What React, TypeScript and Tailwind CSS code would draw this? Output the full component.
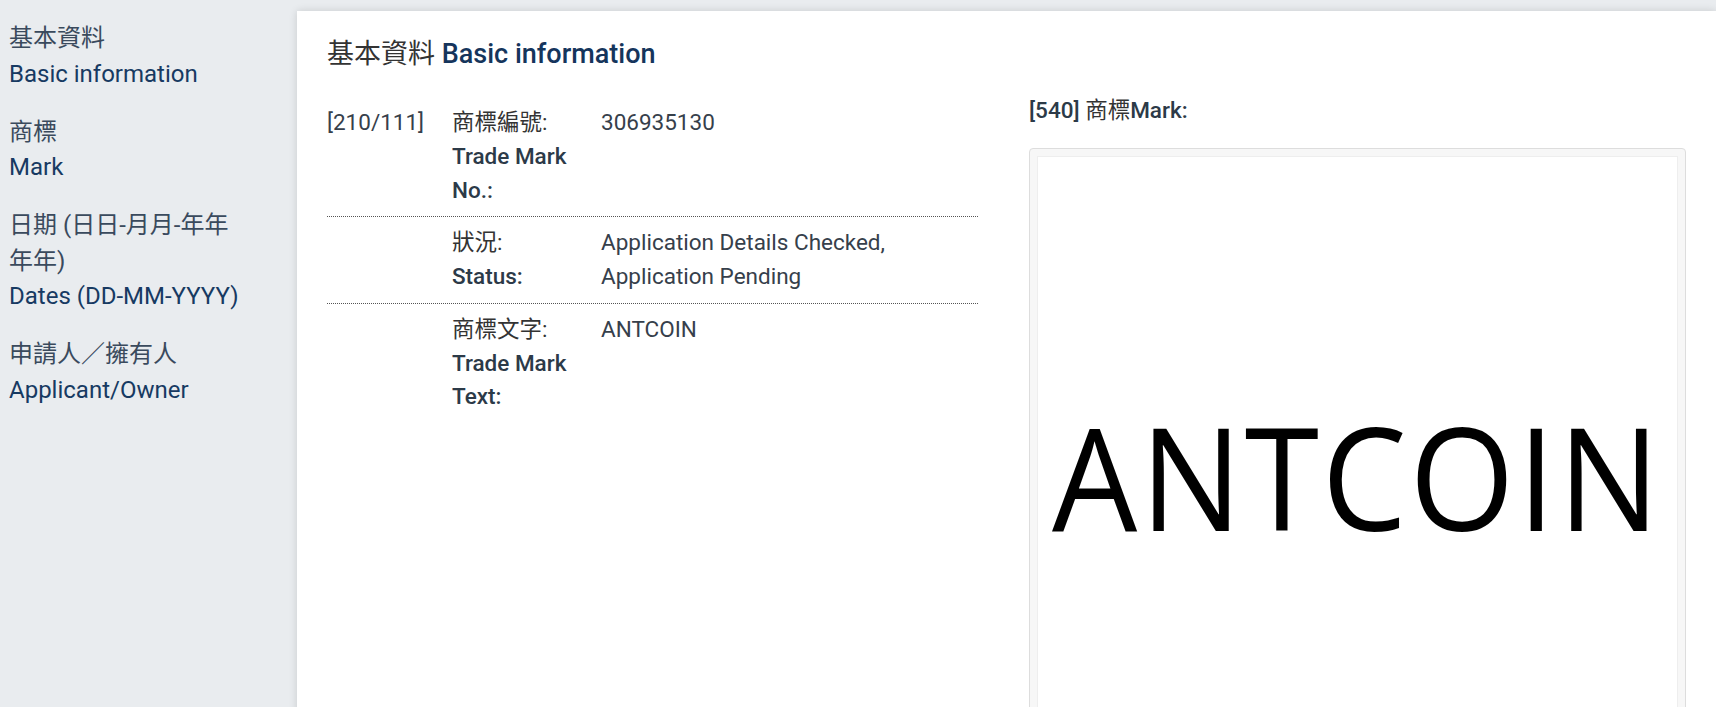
import React from 'react';

type Row = {
  code?: string;
  zh: string;
  en: string;
  value: string;
};

const rows: Row[] = [
  { code: '[210/111]', zh: '商標編號:', en: 'Trade Mark No.:', value: '306935130' },
  { zh: '狀況:', en: 'Status:', value: 'Application Details Checked, Application Pending' },
  { zh: '商標文字:', en: 'Trade Mark Text:', value: 'ANTCOIN' },
];

const nav = [
  { zh: '基本資料', en: 'Basic information' },
  { zh: '商標', en: 'Mark' },
  { zh: '日期 (日日-月月-年年年年)', en: 'Dates (DD-MM-YYYY)' },
  { zh: '申請人／擁有人', en: 'Applicant/Owner' },
];

const App = () => {
  return (
    <div className="min-h-screen bg-[#e9ecef] flex font-['Roboto','Noto_Sans_CJK_TC',sans-serif]">
      <aside className="w-[297px] shrink-0 pl-[9px] pt-[21px]">
        <div className="w-[240px] text-[24px] leading-[35.5px]">
          {nav.map((n) => (
            <div key={n.en} className="mb-[22.5px]">
              <div className="text-[#3a4a5d]">{n.zh}</div>
              <div className="text-[#173a62]">{n.en}</div>
            </div>
          ))}
        </div>
      </aside>

      <main className="flex-1 min-w-0 mt-[11px] bg-white shadow-[0_0_8px_rgba(0,0,0,0.14)] px-[30px] pt-[24px]">
        <h1 className="text-[27px] leading-[39px] text-[#333]">
          基本資料 <span className="font-medium text-[#15355c]">Basic information</span>
        </h1>

        <div className="grid grid-cols-[651px_minmax(0,1fr)] gap-x-[51px] mt-[23px]">
          <div className="text-[22.5px] leading-[33.75px] text-[#36404b]">
            {rows.map((r, i) => (
              <div
                key={r.zh}
                className={`flex pt-[9px] pb-[9px] ${i < rows.length - 1 ? 'border-b border-dotted border-[#555]' : ''}`}
              >
                <div className="w-[125px] shrink-0">{r.code}</div>
                <div className="w-[149px] shrink-0 pr-[14px]">
                  <div className="text-[#333]">{r.zh}</div>
                  <div className="font-medium text-[#2c3a48]">{r.en}</div>
                </div>
                <div className="flex-1">{r.value}</div>
              </div>
            ))}
          </div>

          <div className="min-w-0">
            <div className="text-[22.5px] leading-[33px] text-[#333] -mt-[3px] mb-[21px]">
              <span className="font-medium text-[#2c3a48]">[540]</span> 商標
              <span className="font-medium text-[#2c3a48]">Mark:</span>
            </div>
            <div className="border border-[#ddd] rounded-[4px] bg-[#f7f7f7] p-[7px]">
              <div className="border border-[#eee] bg-white h-[639px] flex items-center justify-center overflow-hidden">
                <span className="font-['Open_Sans',sans-serif] text-[142px] leading-none text-black scale-x-95 tracking-[3px]">
                  ANTCOIN
                </span>
              </div>
            </div>
          </div>
        </div>
      </main>
    </div>
  );
};

export default App;
